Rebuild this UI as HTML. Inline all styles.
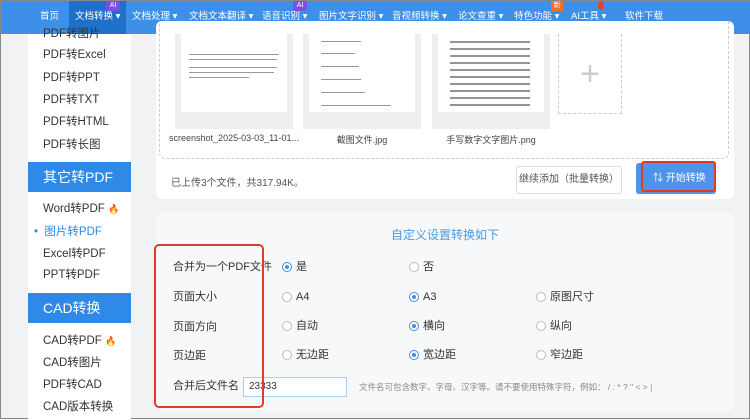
<!DOCTYPE html><html><head><meta charset="utf-8"><style>
*{margin:0;padding:0;box-sizing:border-box}
body{width:750px;height:419px;overflow:hidden;background:#f1f2f4;font-family:"Liberation Sans","Noto Sans CJK SC",sans-serif;font-size:11px;color:#333;position:relative;border:1px solid #888}
.a{position:absolute}
.nav{left:0;top:0;width:750px;height:33px;background:#3d8fe8;color:#fff;font-size:9.5px}
.nav span{position:absolute;top:10px;white-space:nowrap;line-height:12px}
.side{left:27px;top:33px;width:103px;height:386px;background:#fff}
.si{position:absolute;left:15px;font-size:11.5px;color:#333;line-height:14px}
.blk{position:absolute;left:0;width:103px;height:30px;background:#2e8ae6;color:#fff;font-size:14px;padding:6px 0 0 15px;line-height:18px}
.fire{color:#f07030;font-size:9px}
.panel{background:#fff;border-radius:6px}
.th{background:#eeeeee;width:118px;height:95px;top:33px}
.pg{position:absolute;left:6px;top:0;width:106px;height:78px;background:#fff}
.fn{font-size:9px;color:#444;top:132px;text-align:center}
.row{position:absolute;left:172px;font-size:11px;line-height:14px}
.r{position:absolute;width:10px;height:10px;border:1px solid #bbb;border-radius:50%;background:#fff}
.r.on{border-color:#3d8fe8}
.r.on:after{content:"";position:absolute;left:2px;top:2px;width:4px;height:4px;border-radius:50%;background:#3d8fe8}
.rl{position:absolute;font-size:11px;line-height:14px}
.ln{position:absolute;height:1px;background:#999}
</style></head><body>
<div class="a nav">
<div class="a" style="left:68px;top:0;width:57px;height:33px;background:#1f70c8"></div>
<span style="left:39px">首页</span><span style="left:74px">文档转换 ▾</span><span style="left:131px">文档处理 ▾</span><span style="left:188px">文档文本翻译 ▾</span><span style="left:261px">语音识别 ▾</span><span style="left:318px">图片文字识别 ▾</span><span style="left:391px">音视频转换 ▾</span><span style="left:457px">论文查重 ▾</span><span style="left:513px">特色功能 ▾</span><span style="left:570px">AI工具 ▾</span><span style="left:624px">软件下载</span>
<div class="a" style="left:105px;top:0;width:14px;height:10px;background:#7b4fe0;font-size:7px;text-align:center;line-height:10px;border-radius:0 0 3px 3px">AI</div>
<div class="a" style="left:292px;top:0;width:14px;height:10px;background:#7b4fe0;font-size:7px;text-align:center;line-height:10px;border-radius:0 0 3px 3px">AI</div>
<div class="a" style="left:550px;top:0;width:12px;height:10px;background:#f07030;font-size:7px;text-align:center;line-height:10px">新</div>
<div class="a" style="left:597px;top:0;width:6px;height:9px;background:#f04020;border-radius:50% 50% 40% 40%"></div>
</div>
<div class="a side">
<div class="si" style="top:-7px">PDF转图片</div>
<div class="si" style="top:14px">PDF转Excel</div>
<div class="si" style="top:37px">PDF转PPT</div>
<div class="si" style="top:59px">PDF转TXT</div>
<div class="si" style="top:81px">PDF转HTML</div>
<div class="si" style="top:104px">PDF转长图</div>
<div class="blk" style="top:128px">其它转PDF</div>
<div class="si" style="top:168px">Word转PDF <span class="fire">🔥</span></div>
<div class="si" style="top:191px;color:#2e8ae6;left:6px">•&nbsp; 图片转PDF</div>
<div class="si" style="top:213px">Excel转PDF</div>
<div class="si" style="top:234px">PPT转PDF</div>
<div class="blk" style="top:259px">CAD转换</div>
<div class="si" style="top:300px">CAD转PDF <span class="fire">🔥</span></div>
<div class="si" style="top:322px">CAD转图片</div>
<div class="si" style="top:344px">PDF转CAD</div>
<div class="si" style="top:366px">CAD版本转换</div>
</div>
<div class="a panel" style="left:155px;top:20px;width:578px;height:178px"></div>
<div class="a" style="left:158px;top:20px;width:570px;height:138px;border:1px dashed #ccc;border-top:none;border-radius:0 0 6px 6px"></div>
<div class="a th" style="left:174px"><div class="pg"></div>
<div class="ln" style="left:14px;top:20px;width:90px"></div><div class="ln" style="left:14px;top:25px;width:88px"></div><div class="ln" style="left:14px;top:33px;width:88px"></div><div class="ln" style="left:14px;top:38px;width:85px"></div><div class="ln" style="left:14px;top:43px;width:60px"></div></div>
<div class="a th" style="left:302px"><div class="pg"></div>
<div class="ln" style="left:18px;top:7px;width:40px"></div><div class="ln" style="left:18px;top:19px;width:34px"></div><div class="ln" style="left:18px;top:32px;width:38px"></div><div class="ln" style="left:18px;top:45px;width:40px"></div><div class="ln" style="left:18px;top:58px;width:44px"></div><div class="ln" style="left:18px;top:71px;width:70px"></div></div>
<div class="a th" style="left:431px"><div class="pg"></div>
<div class="a" style="left:18px;top:4px;width:80px;height:70px;background:repeating-linear-gradient(#fff 0 3px,#666 3px 5px,#fff 5px 7px);opacity:.7"></div></div>
<div class="a" style="left:557px;top:33px;width:64px;height:80px;border:1px dashed #ccc;border-top:none;color:#ccc;font-size:34px;text-align:center;line-height:80px;font-weight:100">+</div>
<div class="a fn" style="left:168px;width:130px">screenshot_2025-03-03_11-01...</div>
<div class="a fn" style="left:302px;width:118px">截图文件.jpg</div>
<div class="a fn" style="left:431px;width:118px">手写数字文字图片.png</div>
<div class="a" style="left:170px;top:173px;font-size:10px;color:#555">已上传3个文件，共317.94K。</div>
<div class="a" style="left:515px;top:165px;width:106px;height:28px;border:1px solid #ddd;border-radius:3px;background:#fff;font-size:10px;color:#555;text-align:center;line-height:26px">继续添加（批量转换）</div>
<div class="a" style="left:635px;top:162px;width:80px;height:31px;background:#4d94ea;border-radius:3px;color:#fff;font-size:10px;line-height:31px;padding-left:17px">⇅ 开始转换</div>
<div class="a" style="left:640px;top:160px;width:75px;height:31px;border:2px solid #e03a2a;border-radius:3px"></div>
<div class="a" style="left:155px;top:212px;width:578px;height:198px;background:#f7f8fa;border-radius:6px"></div>
<div class="a" style="left:155px;top:225px;width:578px;text-align:center;color:#4a9be0;font-size:12px">自定义设置转换如下</div>
<div class="row" style="top:259px">合并为一个PDF文件</div><div class="row" style="top:289px">页面大小</div><div class="row" style="top:319px">页面方向</div><div class="row" style="top:348px">页边距</div><div class="row" style="top:378px">合并后文件名</div>
<div class="r on" style="left:281px;top:261px"></div><div class="rl" style="left:295px;top:259px">是</div>
<div class="r" style="left:408px;top:261px"></div><div class="rl" style="left:422px;top:259px">否</div>
<div class="r" style="left:281px;top:291px"></div><div class="rl" style="left:295px;top:289px">A4</div>
<div class="r on" style="left:408px;top:291px"></div><div class="rl" style="left:422px;top:289px">A3</div>
<div class="r" style="left:535px;top:291px"></div><div class="rl" style="left:549px;top:289px">原图尺寸</div>
<div class="r" style="left:281px;top:320px"></div><div class="rl" style="left:295px;top:318px">自动</div>
<div class="r on" style="left:408px;top:320px"></div><div class="rl" style="left:422px;top:318px">横向</div>
<div class="r" style="left:535px;top:320px"></div><div class="rl" style="left:549px;top:318px">纵向</div>
<div class="r" style="left:281px;top:349px"></div><div class="rl" style="left:295px;top:347px">无边距</div>
<div class="r on" style="left:408px;top:349px"></div><div class="rl" style="left:422px;top:347px">宽边距</div>
<div class="r" style="left:535px;top:349px"></div><div class="rl" style="left:549px;top:347px">窄边距</div>
<div class="a" style="left:242px;top:376px;width:104px;height:20px;border:1px solid #a8cff0;background:#fff;font-size:10px;padding:0 5px;line-height:18px">23333</div>
<div class="a" style="left:358px;top:380px;font-size:8.5px;color:#888;line-height:12px">文件名可包含数字、字母、汉字等。请不要使用特殊字符，例如： / : * ? " &lt; &gt; |</div>
<div class="a" style="left:153px;top:243px;width:110px;height:164px;border:2.5px solid #e03a2a;border-radius:5px"></div>
</body></html>
